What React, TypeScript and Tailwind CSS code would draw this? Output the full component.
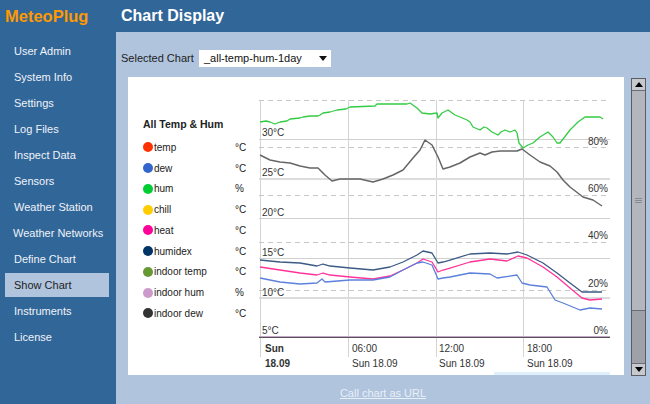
import React from "react";

const nav = [
  "User Admin",
  "System Info",
  "Settings",
  "Log Files",
  "Inspect Data",
  "Sensors",
  "Weather Station",
  "Weather Networks",
  "Define Chart",
  "Show Chart",
  "Instruments",
  "License",
];

const legend: [string, string, string][] = [
  ["temp", "#ff3300", "°C"],
  ["dew", "#3366cc", "°C"],
  ["hum", "#00cc33", "%"],
  ["chill", "#ffcc00", "°C"],
  ["heat", "#ff0099", "°C"],
  ["humidex", "#003366", "°C"],
  ["indoor temp", "#669933", "°C"],
  ["indoor hum", "#cc99cc", "%"],
  ["indoor dew", "#333333", "°C"],
];

const green =
  "260,122 266,121 270,122 275,124 280,122 287,121 290,119 300,118 303,117 310,116 318,116 320,115 323,113 330,112 337,110 346,109 348,108 350,107 375,106 377,104 407,104 410,103 417,108 422,113 430,114 437,113 438,118 442,113 448,110 455,115 460,117 467,120 470,122 473,127 480,130 484,127 487,128 492,132 498,135 501,132 505,130 510,132 515,130 517,133 519,143 523,148 528,145 533,143 540,137 548,132 553,137 557,143 560,143 570,130 578,122 585,117 600,117 603,119";
const gray =
  "260,155 270,160 280,162 290,163 300,166 310,168 318,168 325,175 332,181 340,179 350,179 360,179 373,182 383,179 393,175 403,170 413,158 420,150 425,140 432,145 438,157 443,169 450,167 460,163 470,157 480,153 485,155 492,152 500,151 517,151 522,149 530,155 540,162 550,166 557,172 563,180 570,187 583,197 593,200 602,206";
const navy =
  "260,260 280,262 300,263 317,266 323,264 330,266 350,268 373,270 390,267 403,262 417,255 423,251 432,253 438,263 443,262 450,260 470,254 490,253 507,254 518,252 527,255 543,263 557,273 570,283 582,292 590,292 602,292";
const pink =
  "260,267 280,270 300,273 317,275 323,273 330,275 350,277 373,279 390,276 403,270 417,263 423,259 432,262 438,272 443,270 450,268 470,262 490,259 507,261 518,256 527,258 543,267 557,277 570,288 582,298 590,300 602,299";
const blue =
  "260,278 280,282 300,284 317,283 322,279 325,282 350,280 373,280 390,277 403,270 417,263 423,262 432,265 438,279 443,278 450,277 470,273 490,274 497,278 517,275 522,283 530,285 547,287 555,300 563,303 580,310 590,308 602,309";

function Plot() {
  const solid = [139, 218, 258];
  const thick = [179, 298];
  const dashed = [100, 147, 195, 242, 290];
  const vert = [260, 348, 436, 523];
  const tLabels: [string, number][] = [
    ["30°C", 136],
    ["25°C", 176],
    ["20°C", 216],
    ["15°C", 256],
    ["10°C", 296],
    ["5°C", 334],
  ];
  const hLabels: [string, number][] = [
    ["80%", 145],
    ["60%", 192],
    ["40%", 239],
    ["20%", 287],
    ["0%", 334],
  ];
  const xs: [string, number][] = [
    ["06:00", 352],
    ["12:00", 439],
    ["18:00", 527],
  ];
  return (
    <svg
      width={374}
      height={298}
      viewBox="250 77 374 298"
      className="block"
      style={{ fontFamily: '"Liberation Sans", Arial, sans-serif' }}
    >
      {vert.map((x) => (
        <line key={x} x1={x + 0.5} x2={x + 0.5} y1={100} y2={357} stroke="#d4d4d4" />
      ))}
      {dashed.map((y) => (
        <line key={y} x1={259} x2={610} y1={y + 0.5} y2={y + 0.5} stroke="#c8c8c8" strokeDasharray="5 4" />
      ))}
      {solid.map((y) => (
        <line key={y} x1={259} x2={610} y1={y + 0.5} y2={y + 0.5} stroke="#d0d0d0" />
      ))}
      {thick.map((y) => (
        <line key={y} x1={259} x2={610} y1={y} y2={y} stroke="#dcdcdc" strokeWidth={2} />
      ))}
      <line x1={259} x2={610} y1={336.5} y2={336.5} stroke="#c8a4c8" />
      <line x1={259} x2={610} y1={337.5} y2={337.5} stroke="#555" />
      <g fill="none" strokeLinejoin="round" strokeWidth={1.3}>
        <polyline points={green} stroke="#33cc44" />
        <polyline points={gray} stroke="#666" strokeWidth={1.5} />
        <polyline points={navy} stroke="#3b5a84" />
        <polyline points={pink} stroke="#ff3399" />
        <polyline points={blue} stroke="#5c80dc" />
      </g>
      <g fontSize={10} fill="#333">
        {tLabels.map(([t, y]) => (
          <text key={t} x={262} y={y}>
            {t}
          </text>
        ))}
        {hLabels.map(([t, y]) => (
          <text key={t} x={608} y={y} textAnchor="end">
            {t}
          </text>
        ))}
        <text x={265} y={352} fontWeight="bold">
          Sun
        </text>
        <text x={265} y={367} fontWeight="bold">
          18.09
        </text>
        {xs.map(([t, x]) => (
          <g key={t}>
            <text x={x} y={352}>
              {t}
            </text>
            <text x={x} y={367}>
              Sun 18.09
            </text>
          </g>
        ))}
      </g>
      <rect x={494} y={372} width={116} height={3} fill="#dff0fb" />
    </svg>
  );
}

export default function App() {
  return (
    <div
      className="w-[650px] h-[404px] flex overflow-hidden text-[11px]"
      style={{ fontFamily: '"Liberation Sans", Arial, sans-serif' }}
    >
      <aside className="w-[116px] bg-[#316699] flex flex-col shrink-0">
        <div className="h-[38px] pl-[5px] pt-[6px] text-[16.5px] leading-[20px] font-bold text-[#ff9900]">
          MeteoPlug
        </div>
        {nav.map((n) => (
          <div
            key={n}
            className={
              n === "Show Chart"
                ? "ml-[5px] w-[104px] my-[1px] h-[24px] flex items-center pl-[9px] bg-[#b0c4de] text-[#222]"
                : n === "Weather Networks"
                ? "ml-[5px] w-[104px] my-[1px] h-[24px] flex items-center pl-[8px] text-[#f0f3f8] whitespace-nowrap"
                : "ml-[5px] w-[104px] my-[1px] h-[24px] flex items-center pl-[9px] text-[#f0f3f8]"
            }
          >
            {n}
          </div>
        ))}
      </aside>
      <main className="flex-1 flex flex-col">
        <div className="h-[32px] bg-[#316699] pl-[5px] flex items-center text-[16px] font-bold text-white shrink-0">
          Chart Display
        </div>
        <div className="flex-1 bg-[#b0c4de] flex flex-col">
          <div className="flex items-center pl-[5px] pt-[18px] h-[35px] text-[#222]">
            <span className="w-[78px] whitespace-nowrap">Selected Chart</span>
            <div className="w-[132px] h-[17px] bg-white flex items-center pl-[5px] pr-[4px] justify-between text-[#111] whitespace-nowrap">
              <span>_all-temp-hum-1day</span>
              <svg width="8" height="5" viewBox="0 0 8 5">
                <path d="M0 0 H8 L4 5 Z" fill="#111" />
              </svg>
            </div>
          </div>
          <div className="flex mt-[10px] ml-[12px]">
            <div className="w-[496px] h-[298px] bg-white flex">
              <div className="w-[122px] pl-[15px] pt-[40px] text-[10px] text-[#222]">
                <div className="h-[16px] flex items-center font-bold text-[10.5px]">All Temp &amp; Hum</div>
                <div className="h-[4px]" />
                {legend.map(([name, color, unit]) => (
                  <div key={name} className="h-[20.75px] flex items-center">
                    <span className="w-[10px] h-[10px] rounded-full shrink-0" style={{ backgroundColor: color }} />
                    <span className="ml-[1px] w-[81px]">{name}</span>
                    <span>{unit}</span>
                  </div>
                ))}
              </div>
              <Plot />
            </div>
            <div className="ml-[7px] mt-[1px] w-[15px] h-[298px] border border-[#5a5e64] bg-[#9ea2a8] flex flex-col">
              <div className="h-[12px] bg-[#c6cacf] border-b border-[#6a6e74] flex items-center justify-center">
                <svg width="8" height="5" viewBox="0 0 8 5">
                  <path d="M0 5 H8 L4 0 Z" fill="#000" />
                </svg>
              </div>
              <div className="h-[220px] bg-[#b3b7bd] border-b border-[#6a6e74] flex flex-col items-center justify-center gap-[1px]">
                <div className="w-[7px] h-[1px] bg-[#888c92]" />
                <div className="w-[7px] h-[1px] bg-[#888c92]" />
                <div className="w-[7px] h-[1px] bg-[#888c92]" />
              </div>
              <div className="flex-1" />
              <div className="h-[12px] bg-[#c6cacf] border-t border-[#6a6e74] flex items-center justify-center">
                <svg width="8" height="5" viewBox="0 0 8 5">
                  <path d="M0 0 H8 L4 5 Z" fill="#000" />
                </svg>
              </div>
            </div>
          </div>
          <div className="mt-[9px] text-center">
            <span className="underline text-[#e9eff8]">Call chart as URL</span>
          </div>
        </div>
      </main>
    </div>
  );
}
